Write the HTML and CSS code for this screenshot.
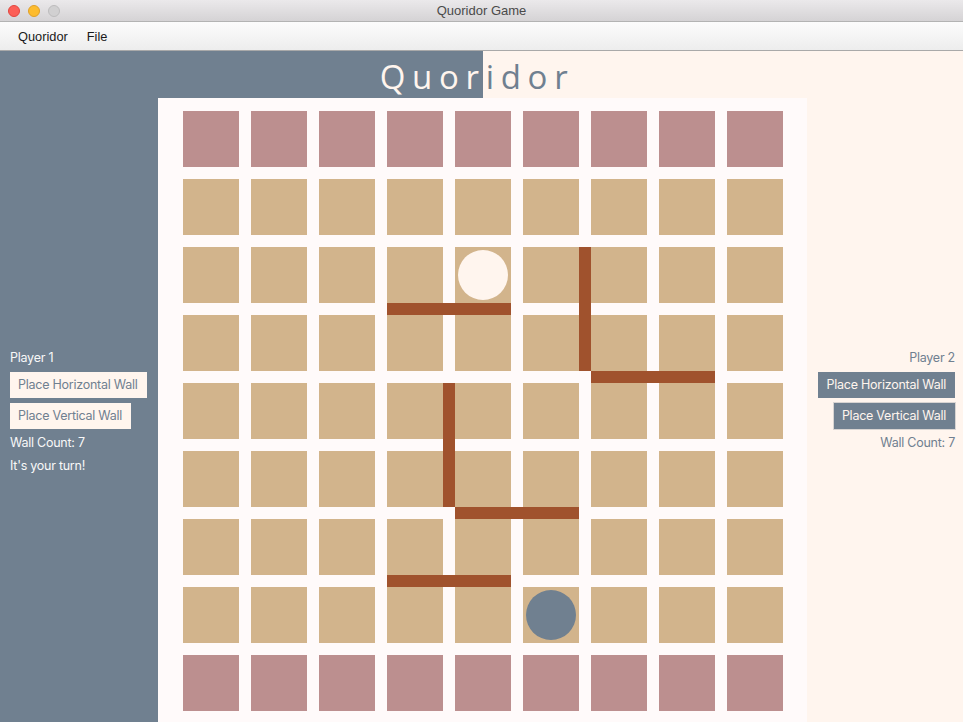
FILE: index.html
```html
<!DOCTYPE html>
<html>
<head>
<meta charset="utf-8">
<title>Quoridor Game</title>
<link rel="stylesheet" href="styles.css">
</head>
<body>
<div class="window">
  <div class="titlebar">
    <div class="lights">
      <span class="light red"></span>
      <span class="light yellow"></span>
      <span class="light gray"></span>
    </div>
    <div class="title-text">Quoridor Game</div>
  </div>
  <div class="menubar">
    <span class="menu-item">Quoridor</span>
    <span class="menu-item">File</span>
  </div>
  <div class="content">
    <div class="heading">
      <span class="h-left">Quor</span><span class="h-right">idor</span>
    </div>
    <div class="main">
      <div class="side side-left">
        <div class="label">Player 1</div>
        <button class="btn btn-light">Place Horizontal Wall</button>
        <button class="btn btn-light">Place Vertical Wall</button>
        <div class="label">Wall Count: 7</div>
        <div class="label">It's your turn!</div>
      </div>
      <div class="board">
        <div class="grid" id="grid"></div>
        <div class="wall hwall" style="left:229px;top:205px"></div>
        <div class="wall hwall" style="left:433px;top:273px"></div>
        <div class="wall hwall" style="left:297px;top:409px"></div>
        <div class="wall hwall" style="left:229px;top:477px"></div>
        <div class="wall vwall" style="left:421px;top:149px"></div>
        <div class="wall vwall" style="left:285px;top:285px"></div>
      </div>
      <div class="side side-right">
        <div class="label">Player 2</div>
        <button class="btn btn-dark">Place Horizontal Wall</button>
        <button class="btn btn-dark btn-bordered">Place Vertical Wall</button>
        <div class="label">Wall Count: 7</div>
        <div class="label placeholder">&nbsp;</div>
      </div>
    </div>
  </div>
</div>
<script src="script.js"></script>
</body>
</html>
```
FILE: script.js
```js
(function () {
  var grid = document.getElementById('grid');
  for (var r = 0; r < 9; r++) {
    for (var c = 0; c < 9; c++) {
      var cell = document.createElement('div');
      cell.className = 'cell' + ((r === 0 || r === 8) ? ' goal' : '');
      if (r === 2 && c === 4) {
        var p = document.createElement('div');
        p.className = 'pawn pawn-light';
        cell.appendChild(p);
      }
      if (r === 7 && c === 5) {
        var q = document.createElement('div');
        q.className = 'pawn pawn-dark';
        cell.appendChild(q);
      }
      grid.appendChild(cell);
    }
  }
})();
```
FILE: styles.css
```css
* { box-sizing: border-box; }
html, body { margin: 0; padding: 0; }
body {
  width: 963px;
  height: 722px;
  overflow: hidden;
  font-family: Inter, "Noto Sans", sans-serif;
  background: #fffafa;
}
.window { display: flex; flex-direction: column; height: 722px; }

.titlebar {
  height: 22px;
  position: relative;
  background: linear-gradient(#ebe9eb, #d5d3d5);
  border-bottom: 1px solid #b3b3b3;
  display: flex;
  align-items: center;
  justify-content: center;
}
.lights {
  position: absolute;
  left: 8px;
  top: 5px;
  display: flex;
  gap: 8px;
}
.light { width: 12px; height: 12px; border-radius: 50%; display: block; }
.red { background: #fc5f57; border: 1px solid #e2463f; }
.yellow { background: #fdbc2e; border: 1px solid #e0a028; }
.gray { background: #d1d0d1; border: 1px solid #bdbcbd; }
.title-text {
  font-family: "Liberation Sans", sans-serif;
  font-size: 13px;
  color: #4a4a4a;
}

.menubar {
  height: 29px;
  background: linear-gradient(#fcfcfc, #ededed);
  border-bottom: 1px solid #a9a9a9;
  display: flex;
  align-items: center;
  padding-left: 18px;
  gap: 19px;
  font-family: "Liberation Sans", sans-serif;
  font-size: 12.8px;
  color: #1a1a1a;
}

.content { flex: 1; display: flex; flex-direction: column; }

.heading {
  height: 47px;
  background: linear-gradient(to right, #708090 483px, #fff5ee 483px);
  display: flex;
  justify-content: center;
  align-items: center;
  font-family: "Open Sans", sans-serif;
  font-size: 33px;
  letter-spacing: 6.7px;
  padding-right: 9px;
  padding-top: 3px;
}
.h-left { color: #fff5ee; }
.h-right { color: #708090; }

.main { flex: 1; display: flex; }

.side {
  display: flex;
  flex-direction: column;
  justify-content: center;
  gap: 5px;
  padding-top: 3px;
  font-size: 12.5px;
  letter-spacing: -0.25px;
}
.side-left {
  width: 158px;
  background: #708090;
  padding-left: 10px;
  align-items: flex-start;
  color: #f8f8f8;
}
.side-right {
  flex: 1;
  background: #fff5ee;
  padding-right: 8px;
  align-items: flex-end;
  color: #708090;
}
.label { height: 18px; line-height: 18px; }
.placeholder { visibility: hidden; }

.btn {
  height: 26px;
  padding: 0 9px 0 8px;
  border: none;
  font-family: inherit;
  font-size: 12.5px;
  letter-spacing: -0.25px;
  line-height: 26px;
  cursor: pointer;
}
.btn-light { background: #fff5ee; color: #708090; }
.btn-dark { background: #708090; color: #fff5ee; }
.btn-bordered { box-shadow: 0 0 0 1px #d8d4d2; }

.board {
  width: 649px;
  position: relative;
  background: #fffafa;
  padding: 13px 24px 11px 25px;
}
.grid {
  display: grid;
  grid-template-columns: repeat(9, 56px);
  grid-template-rows: repeat(9, 56px);
  gap: 12px;
}
.cell {
  background: #d2b48c;
  display: flex;
  align-items: center;
  justify-content: center;
}
.cell.goal { background: #bc8f8f; }
.pawn { width: 50px; height: 50px; border-radius: 50%; }
.pawn-light { background: #fff5ee; }
.pawn-dark { background: #708090; }

.wall { position: absolute; background: #a0522d; }
.hwall { width: 124px; height: 12px; }
.vwall { width: 12px; height: 124px; }
```
